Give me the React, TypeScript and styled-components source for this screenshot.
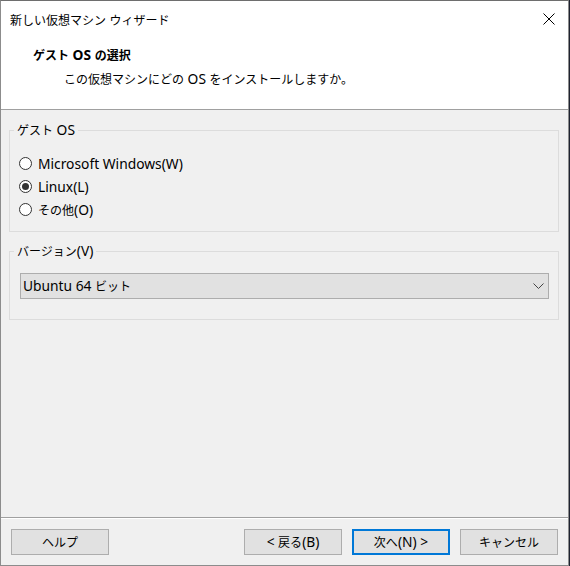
import React from "react";
import styled, { createGlobalStyle } from "styled-components";

const GlobalStyle = createGlobalStyle`
  html, body {
    margin: 0;
    padding: 0;
    background: #1e2230;
  }
  body {
    font-family: "Noto Sans CJK JP", sans-serif;
    font-size: 12px;
    color: #000;
  }
`;

// Latin runs are set a little larger than the kana, like the UI font does
const Lat = styled.span`
  font-family: "Noto Sans", "Noto Sans CJK JP", sans-serif;
  font-size: 13.8px;
`;

const Mixed = ({ text }: { text: string }) => (
  <>
    {text.split(/([\x20-\x7e]+)/).map((part, i) =>
      part === "" ? null : /^[\x20-\x7e]+$/.test(part) ? (
        <Lat key={i}>{part}</Lat>
      ) : (
        <React.Fragment key={i}>{part}</React.Fragment>
      )
    )}
  </>
);

const App = () => {
  return (
    <>
      <GlobalStyle />
      <Window>
        <TitleBar>
          <TitleText>
            <Mixed text="新しい仮想マシン ウィザード" />
          </TitleText>
          <CloseButton type="button" aria-label="閉じる">
            <svg width="12" height="12" viewBox="0 0 12 12">
              <path d="M0.5 0.5 L11.5 11.5 M11.5 0.5 L0.5 11.5" stroke="#000" strokeWidth="1" />
            </svg>
          </CloseButton>
        </TitleBar>
        <Header>
          <HeaderTitle>
            <Mixed text="ゲスト OS の選択" />
          </HeaderTitle>
          <HeaderSub>
            <Mixed text="この仮想マシンにどの OS をインストールしますか。" />
          </HeaderSub>
        </Header>
        <Body>
          <Group>
            <Legend>
              <Mixed text="ゲスト OS" />
            </Legend>
            <RadioList>
              <RadioRow>
                <Radio type="radio" name="os" />
                <Mixed text="Microsoft Windows(W)" />
              </RadioRow>
              <RadioRow>
                <Radio type="radio" name="os" defaultChecked />
                <Mixed text="Linux(L)" />
              </RadioRow>
              <RadioRow>
                <Radio type="radio" name="os" />
                <span>
                  <Mixed text="その他(O)" />
                </span>
              </RadioRow>
            </RadioList>
          </Group>
          <VersionGroup>
            <Legend>
              <Mixed text="バージョン(V)" />
            </Legend>
            <Combo>
              <span>
                <Mixed text="Ubuntu 64 ビット" />
              </span>
              <svg width="11" height="6" viewBox="0 0 11 6">
                <path d="M0.5 0.5 L5.5 5.5 L10.5 0.5" stroke="#444" strokeWidth="1" fill="none" />
              </svg>
            </Combo>
          </VersionGroup>
        </Body>
        <Footer>
          <Button>ヘルプ</Button>
          <Spacer />
          <Button>
            <Mixed text="< 戻る(B)" />
          </Button>
          <Button primary>
            <Mixed text="次へ(N) >" />
          </Button>
          <Button>キャンセル</Button>
        </Footer>
      </Window>
    </>
  );
};

export default App;

const Window = styled.div`
  box-sizing: border-box;
  width: 569px;
  height: 566px;
  border: 1px solid #8c8c8c;
  border-top-color: #6e6e6e;
  background: #f0f0f0;
  display: flex;
  flex-direction: column;
`;

const TitleBar = styled.div`
  height: 36px;
  background: #fff;
  display: flex;
  align-items: center;
  padding: 0 13px 0 9px;
`;

const TitleText = styled.div`
  flex: 1;
  line-height: 16px;
  padding-top: 1px;
`;

const CloseButton = styled.button`
  border: none;
  background: none;
  padding: 0;
  width: 12px;
  height: 12px;
  display: flex;
`;

const Header = styled.div`
  height: 62px;
  background: #fff;
  border-bottom: 1px solid #a0a0a0;
  padding-top: 10px;
`;

const HeaderTitle = styled.div`
  font-weight: bold;
  line-height: 16px;
  padding-left: 32px;
`;

const HeaderSub = styled.div`
  line-height: 16px;
  margin-top: 8px;
  padding-left: 63px;
`;

const Body = styled.div`
  flex: 1;
  padding: 12px 9px 0 8px;
  display: flex;
  flex-direction: column;
`;

const Group = styled.fieldset`
  margin: 0;
  padding: 0 0 10px 0;
  border: 1px solid #dcdcdc;
  min-width: 0;
`;

const VersionGroup = styled(Group)`
  margin-top: 11px;
  padding: 14px 0 20px 0;
`;

const Legend = styled.legend`
  margin-left: 4px;
  padding: 0 3px;
  line-height: 16px;
`;

const RadioList = styled.div`
  padding: 14px 0 0 9px;
  display: flex;
  flex-direction: column;
`;

const RadioRow = styled.label`
  display: flex;
  align-items: center;
  height: 23px;
  gap: 6px;
  line-height: 16px;
`;

const Radio = styled.input`
  appearance: none;
  margin: 0;
  width: 13px;
  height: 13px;
  border-radius: 50%;
  border: 1px solid #333;
  background: #fff;
  box-sizing: border-box;
  position: relative;
  flex-shrink: 0;

  &:checked::after {
    content: "";
    position: absolute;
    left: 2px;
    top: 2px;
    width: 7px;
    height: 7px;
    border-radius: 50%;
    background: #333;
  }
`;

const Combo = styled.div`
  box-sizing: border-box;
  height: 26px;
  margin: 0 9px 0 10px;
  background: #e1e1e1;
  border: 1px solid #adadad;
  display: flex;
  align-items: center;
  justify-content: space-between;
  padding: 0 4px 0 2px;
  line-height: 16px;
`;

const Footer = styled.div`
  border-top: 1px solid #a0a0a0;
  box-shadow: inset 0 1px 0 #fff;
  padding: 11px 10px 10px 10px;
  display: flex;
  gap: 10px;
`;

const Spacer = styled.div`
  flex: 1;
`;

const Button = styled.button<{ primary?: boolean }>`
  box-sizing: border-box;
  width: 98px;
  height: 26px;
  background: #e1e1e1;
  border: ${(p) => (p.primary ? "2px solid #0078d7" : "1px solid #adadad")};
  font-family: inherit;
  font-size: 12px;
  color: #000;
  padding: 0;
  line-height: 16px;
`;
